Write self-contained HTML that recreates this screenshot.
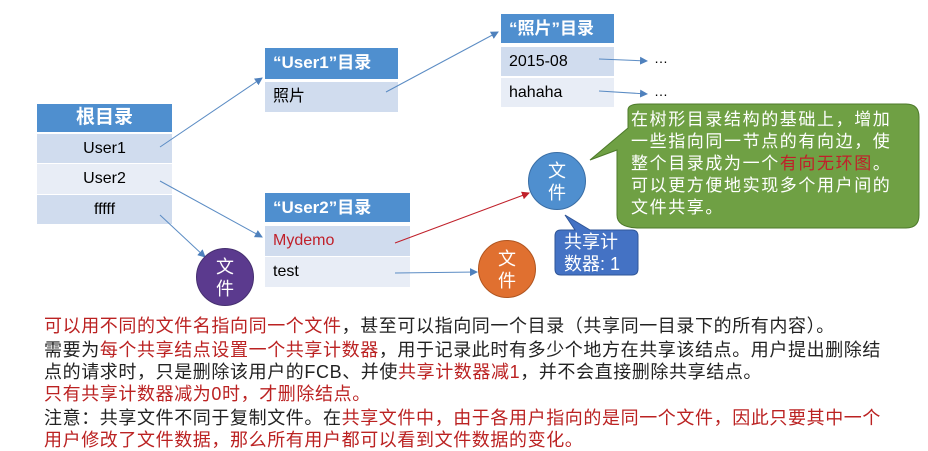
<!DOCTYPE html><html><head><meta charset="utf-8"><style>
body{margin:0;width:928px;height:449px;background:#fff;position:relative;overflow:hidden;font-family:"Liberation Sans","Noto Sans CJK SC",sans-serif}
.a{position:absolute;box-sizing:border-box}
.h{background:#4f8fcf;color:#fff;font-weight:bold;font-size:17px;padding-left:8px;line-height:30px}
.r1{background:#d0dcee;font-size:16px;padding-left:8px}
.r2{background:#e8edf6;font-size:16px;padding-left:8px}
.c{text-align:center;padding-left:0}
.circ{position:absolute;border-radius:50%;color:#fff;font-size:18px;text-align:center;line-height:22px;box-sizing:border-box;padding-top:7px}
.t{position:absolute;left:44px;font-size:18px;letter-spacing:0.6px;color:#222;white-space:nowrap;line-height:22px}
.red{color:#b22}
</style></head><body>
<div class="a h c" style="left:37px;top:104px;width:135px;height:28px;line-height:28px;font-size:19px">根目录</div>
<div class="a r1 c" style="left:37px;top:134px;width:135px;height:29px;line-height:29px">User1</div>
<div class="a r2 c" style="left:37px;top:164px;width:135px;height:30px;line-height:30px">User2</div>
<div class="a r1 c" style="left:37px;top:195px;width:135px;height:29px;line-height:29px">fffff</div>

<div class="a h" style="left:265px;top:48px;width:133px;height:31px">“User1”目录</div>
<div class="a r1" style="left:265px;top:82px;width:133px;height:30px;line-height:30px">照片</div>

<div class="a h" style="left:265px;top:193px;width:145px;height:29px;line-height:29px">“User2”目录</div>
<div class="a r1" style="left:265px;top:226px;width:145px;height:30px;line-height:30px;color:#c0202a">Mydemo</div>
<div class="a r2" style="left:265px;top:257px;width:145px;height:30px;line-height:30px">test</div>

<div class="a h" style="left:501px;top:14px;width:113px;height:29px;line-height:29px">“照片”目录</div>
<div class="a r1" style="left:501px;top:47px;width:113px;height:29px;line-height:29px">2015-08</div>
<div class="a r2" style="left:501px;top:78px;width:113px;height:29px;line-height:29px">hahaha</div>
<div class="a" style="left:654px;top:50px;font-size:14px">…</div>
<div class="a" style="left:654px;top:83px;font-size:14px">…</div>

<svg class="a" style="left:0;top:0" width="928" height="449">
<defs><marker id="m" markerWidth="8" markerHeight="8" refX="7" refY="4" orient="auto" markerUnits="userSpaceOnUse"><path d="M0,0L8,4L0,8z" fill="#4f81bd"/></marker>
<marker id="mr" markerWidth="8" markerHeight="8" refX="7" refY="4" orient="auto" markerUnits="userSpaceOnUse"><path d="M0,0L8,4L0,8z" fill="#c0202a"/></marker></defs>
<g stroke="#5b8cc4" stroke-width="1" fill="none">
<line x1="160" y1="147" x2="262" y2="78" marker-end="url(#m)"/>
<line x1="386" y1="92" x2="498" y2="32" marker-end="url(#m)"/>
<line x1="160" y1="181" x2="262" y2="237" marker-end="url(#m)"/>
<line x1="160" y1="215" x2="205" y2="257" marker-end="url(#m)"/>
<line x1="395" y1="273" x2="477" y2="272" marker-end="url(#m)"/>
<line x1="599" y1="59" x2="647" y2="61" marker-end="url(#m)"/>
<line x1="599" y1="91" x2="647" y2="94" marker-end="url(#m)"/>
</g>
<line x1="395" y1="243" x2="529" y2="193" stroke="#c0202a" marker-end="url(#mr)"/>
<path d="M590,160 L628,128 L628,110 Q628,104 640,104 L906,104 Q919,104 919,117 L919,215 Q919,228 906,228 L640,228 Q617,228 617,215 L617,150 Z" fill="#6fa044" stroke="#4d7a2a"/>
<path d="M565,215 L590,230 L632,230 Q638,230 638,236 L638,269 Q638,275 632,275 L561,275 Q555,275 555,269 L555,236 Q555,230 561,230 L575,230 Z" fill="#4472c4" stroke="#2f5597"/>
</svg>
<div class="a" style="left:631px;top:109px;width:272px;color:#fff;font-size:17px;letter-spacing:1.6px;line-height:22px">在树形目录结构的基础上，增加一些指向同一节点的有向边，使整个目录成为一个<span style="color:#c0202a">有向无环图</span>。可以更方便地实现多个用户间的文件共享。</div>
<div class="a" style="left:564px;top:231px;color:#fff;font-size:18px;line-height:22px">共享计<br>数器: 1</div>

<div class="circ" style="left:196px;top:248px;width:58px;height:58px;background:#5b3a8e;border:1px solid #463070">文<br>件</div>
<div class="circ" style="left:528px;top:152px;width:58px;height:58px;background:#4f8fcf;border:1px solid #3a6ea5">文<br>件</div>
<div class="circ" style="left:478px;top:240px;width:58px;height:58px;background:#e07030;border:1px solid #b05520">文<br>件</div>

<div class="t" style="top:315px"><span class="red">可以用不同的文件名指向同一个文件</span>，甚至可以指向同一个目录（共享同一目录下的所有内容）。</div>
<div class="t" style="top:339px">需要为<span class="red">每个共享结点设置一个共享计数器</span>，用于记录此时有多少个地方在共享该结点。用户提出删除结</div>
<div class="t" style="top:361px">点的请求时，只是删除该用户的FCB、并使<span class="red">共享计数器减1</span>，并不会直接删除共享结点。</div>
<div class="t red" style="top:383px">只有共享计数器减为0时，才删除结点。</div>
<div class="t" style="top:407px">注意：共享文件不同于复制文件。在<span class="red">共享文件中，由于各用户指向的是同一个文件，因此只要其中一个</span></div>
<div class="t red" style="top:429px">用户修改了文件数据，那么所有用户都可以看到文件数据的变化。</div>
</body></html>
